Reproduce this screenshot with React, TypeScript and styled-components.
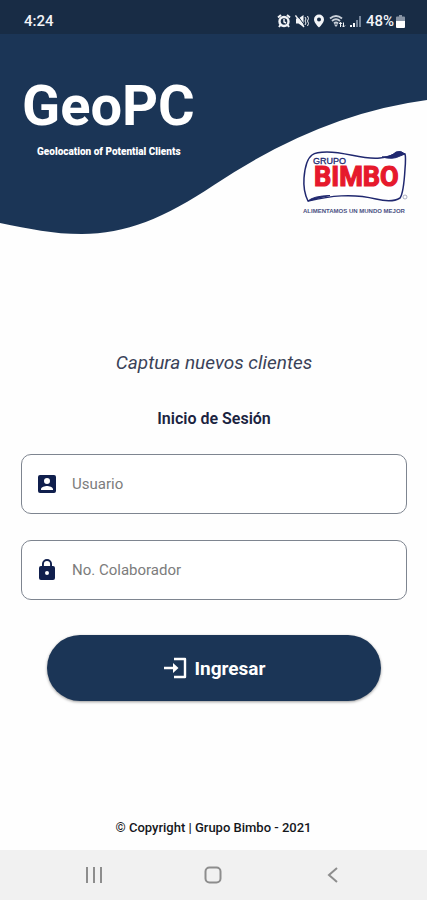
import React, { useState } from "react";
import styled, { createGlobalStyle } from "styled-components";

const navy = "#1b3556";
const ink = "#1a2340";

const GlobalStyle = createGlobalStyle`
  *, *::before, *::after { box-sizing: border-box; }
  body { margin: 0; background: #fff; font-family: Roboto, "Liberation Sans", sans-serif; }
  h1, h2, p { margin: 0; }
`;

const Screen = styled.div`
  min-height: 100vh;
  display: flex;
  flex-direction: column;
  background: #fefefe;
`;

const StatusBar = styled.div`
  height: 34px;
  padding: 8px 22px 0 24px;
  display: flex;
  align-items: center;
  justify-content: space-between;
  background: #182c45;
  color: #f2f4f7;
  font-size: 15px;
  font-weight: 500;
`;

const StatusIcons = styled.div`
  display: flex;
  align-items: center;
  gap: 4px;
  svg { display: block; }
`;

const Battery = styled.span`
  display: flex;
  align-items: center;
  gap: 2px;
`;

const Header = styled.header`
  position: relative;
  height: 200px;
  padding: 40px 19px 0 22px;
  display: flex;
  justify-content: space-between;
`;

const Wave = styled.svg`
  position: absolute;
  inset: 0;
  width: 100%;
  height: 100%;
`;

const Brand = styled.div`
  position: relative;
  color: #fff;
`;

const Title = styled.h1`
  font-size: 56px;
  line-height: 64px;
  font-weight: 700;
`;

const Tagline = styled.p`
  padding: 7px 0 0 15px;
  font-size: 10px;
  line-height: 14px;
  font-weight: 900;
`;

const Logo = styled.svg`
  position: relative;
  margin-top: 75px;
  flex: none;
`;

const Form = styled.form`
  flex: 1;
  padding: 114px 20px 0 21px;
  display: flex;
  flex-direction: column;
`;

const Lead = styled.p`
  text-align: center;
  font-size: 19px;
  line-height: 30px;
  font-style: italic;
  font-weight: 400;
  color: #3a4258;
`;

const FormTitle = styled.h2`
  margin: 29px 0 23px;
  text-align: center;
  font-size: 16px;
  line-height: 24px;
  font-weight: 600;
  color: ${ink};
`;

const Field = styled.label`
  height: 60px;
  margin-bottom: 26px;
  padding: 0 13px;
  display: flex;
  align-items: center;
  gap: 13px;
  border: 1px solid #7e8590;
  border-radius: 10px;
  background: #fff;
  svg { flex: none; }
`;

const TextInput = styled.input`
  flex: 1;
  min-width: 0;
  height: 40px;
  padding: 0;
  border: 0;
  outline: 0;
  background: transparent;
  font: 400 15px Roboto, "Liberation Sans", sans-serif;
  color: ${ink};
  &::placeholder { color: #7c7c7c; opacity: 1; }
`;

const Submit = styled.button`
  height: 66px;
  margin: 9px 26px 0;
  display: flex;
  align-items: center;
  justify-content: center;
  gap: 8px;
  border: 0;
  border-radius: 33px;
  background: ${navy};
  box-shadow: 0 1px 3px rgba(0, 0, 0, 0.4);
  color: #fff;
  font: 700 19px Roboto, "Liberation Sans", sans-serif;
  cursor: pointer;
`;

const Footer = styled.footer`
  padding-bottom: 12px;
  text-align: center;
  font-size: 13px;
  line-height: 20px;
  font-weight: 500;
  color: #15171c;
`;

const NavBar = styled.nav`
  height: 50px;
  padding: 0 34px;
  display: grid;
  grid-template-columns: repeat(3, 1fr);
  background: #f1f1f1;
`;

const NavButton = styled.button`
  display: flex;
  align-items: center;
  justify-content: center;
  padding: 0;
  border: 0;
  background: transparent;
  cursor: pointer;
`;

function AlarmIcon() {
  return (
    <svg width="14" height="14" viewBox="0 0 14 14" aria-hidden="true">
      <circle cx="7" cy="7.5" r="4.5" fill="none" stroke="#f2f4f7" strokeWidth="2.400" />
      <path d="M1 3.500 4 1M13 3.500 10 1M3.400 11 2 13M10.600 11 12 13" stroke="#f2f4f7" strokeWidth="2" />
      <path d="M7 5v3l2 1" fill="none" stroke="#f2f4f7" strokeWidth="1.400" />
    </svg>
  );
}

function MuteIcon() {
  return (
    <svg width="14" height="14" viewBox="0 0 14 14" aria-hidden="true">
      <path d="M1 4.500h2.500L8.500 1v12L3.500 9.500H1z" fill="#f2f4f7" />
      <path d="M2 1 9.500 11" stroke="#182c45" strokeWidth="1" />
      <path d="M.5 1.500 9 13" stroke="#f2f4f7" strokeWidth="1.300" />
      <path d="M10 3l1 2-1 2 1 2-1 2M12.500 2l1 2.500-1 2.500 1 2.500-1 2.500" fill="none" stroke="#f2f4f7" />
    </svg>
  );
}

function PinIcon() {
  return (
    <svg width="12" height="14" viewBox="0 0 12 14" aria-hidden="true">
      <path fillRule="evenodd" d="M6 .5a5 5 0 0 0-5 5C1 9 6 13.500 6 13.500S11 9 11 5.500a5 5 0 0 0-5-5zm0 3a2 2 0 1 1 0 4 2 2 0 0 1 0-4z" fill="#f2f4f7" />
    </svg>
  );
}

function WifiIcon() {
  return (
    <svg width="17" height="14" viewBox="0 0 17 14" aria-hidden="true">
      <path d="M1 4.500q6-5 12 0M3 7q4-3.500 8 0M5 9.500q2-1.800 4 0" fill="none" stroke="#c9d0d9" strokeWidth="1.900" />
      <path d="M5 10.500h4L7 13z" fill="#c9d0d9" />
      <path d="M11.500 13V8.500M10 10l1.500-1.800L13 10M14.500 8.500V13M13 11.500l1.500 1.500 1.500-1.500" fill="none" stroke="#f2f4f7" />
    </svg>
  );
}

function SignalIcon() {
  return (
    <svg width="12" height="13" viewBox="0 0 12 13" aria-hidden="true">
      <path d="M0 10h2v2H0zM3 8h2v4H3z" fill="#f2f4f7" />
      <path d="M6 5h2v7H6zM9 1h2v11H9z" fill="#75859a" />
    </svg>
  );
}

function BatteryIcon() {
  return (
    <svg width="9" height="13" viewBox="0 0 9 13" aria-hidden="true">
      <path d="M3 0h3v1.500h2q1 0 1 1V7H0V2.500q0-1 1-1h2z" fill="#8793a3" />
      <path d="M0 6h9v6q0 1-1 1H1q-1 0-1-1z" fill="#fff" />
    </svg>
  );
}

function BimboLogo() {
  return (
    <Logo width="106" height="68" viewBox="0 0 106 68" role="img" aria-label="Grupo Bimbo">
      <path
        d="M10 6Q14 3 25 3C45 3 60 11 78 9Q88 8 94 4L103 5Q104 8 103 20C102 37 101 45 98 49Q90 54 74 50C50 44 28 47 6 52Q1 42 2 29C3 16 6 9 10 6Z"
        fill="#fff"
        stroke="#20286f"
        strokeWidth="1.500"
      />
      <path d="M80 8Q89 8 94 3Q99 1 103 5L98 7Q91 11 80 8zM6 52Q11 47 28 46.500Q19 48 6 52z" fill="#20286f" stroke="#20286f" strokeWidth="1" />
      <text x="11" y="15" fontFamily="Liberation Sans, sans-serif" fontSize="9" fill="#20286f" stroke="#20286f" strokeWidth=".3">GRUPO</text>
      <text x="12" y="37" fontFamily="Roboto, sans-serif" fontSize="27" fontWeight="700" fill="#e6192c" stroke="#e6192c" strokeWidth="1.200">BIMBO</text>
      <circle cx="103" cy="48" r="2" fill="none" stroke="#8b8faa" strokeWidth=".7" />
      <text x="1" y="64" fontFamily="Liberation Sans, sans-serif" fontSize="6" fontWeight="700" fill="#4a5082">ALIMENTAMOS UN MUNDO MEJOR</text>
    </Logo>
  );
}

export default function App() {
  const [user, setUser] = useState("");
  const [employee, setEmployee] = useState("");

  return (
    <>
      <GlobalStyle />
      <Screen>
        <StatusBar>
          <span>4:24</span>
          <StatusIcons>
            <AlarmIcon />
            <MuteIcon />
            <PinIcon />
            <WifiIcon />
            <SignalIcon />
            <Battery>
              48%
              <BatteryIcon />
            </Battery>
          </StatusIcons>
        </StatusBar>
        <Header>
          <Wave viewBox="0 0 427 200" preserveAspectRatio="none" aria-hidden="true">
            <path d="M0 0V189C30 195 52 200 82 200C125 200 165 184 214 151Q320 80 427 66V0Z" fill={navy} />
          </Wave>
          <Brand>
            <Title>GeoPC</Title>
            <Tagline>Geolocation of Potential Clients</Tagline>
          </Brand>
          <BimboLogo />
        </Header>
        <Form onSubmit={(event) => event.preventDefault()}>
          <Lead>Captura nuevos clientes</Lead>
          <FormTitle>Inicio de Sesión</FormTitle>
          <Field>
            <svg width="24" height="24" viewBox="0 0 24 24" fill="#101f4d" aria-hidden="true">
              <path d="M3 5v14a2 2 0 0 0 2 2h14a2 2 0 0 0 2-2V5a2 2 0 0 0-2-2H5a2 2 0 0 0-2 2zm12 4a3 3 0 1 1-6 0 3 3 0 0 1 6 0zm-9 8c0-2 4-3.100 6-3.100s6 1.100 6 3.100v1H6v-1z" />
            </svg>
            <TextInput
              aria-label="Usuario"
              placeholder="Usuario"
              value={user}
              onChange={(event) => setUser(event.target.value)}
            />
          </Field>
          <Field>
            <svg width="24" height="24" viewBox="0 0 24 24" fill="#101f4d" aria-hidden="true">
              <path d="M18 8h-1V6A5 5 0 0 0 7 6v2H6a2 2 0 0 0-2 2v10a2 2 0 0 0 2 2h12a2 2 0 0 0 2-2V10a2 2 0 0 0-2-2zm-6 9a2 2 0 1 1 0-4 2 2 0 0 1 0 4zm3.100-9H8.900V6a3.100 3.100 0 0 1 6.200 0v2z" />
            </svg>
            <TextInput
              aria-label="No. Colaborador"
              placeholder="No. Colaborador"
              value={employee}
              onChange={(event) => setEmployee(event.target.value)}
            />
          </Field>
          <Submit type="submit">
            <svg width="24" height="24" viewBox="0 0 24 24" aria-hidden="true">
              <path d="M11 3h11v18H11" fill="none" stroke="#fff" strokeWidth="2.400" strokeLinejoin="round" />
              <path d="M1 10.700h9V7l5.500 5-5.500 5v-3.700H1z" fill="#fff" />
            </svg>
            Ingresar
          </Submit>
        </Form>
        <Footer>© Copyright | Grupo Bimbo - 2021</Footer>
        <NavBar>
          <NavButton type="button" aria-label="Recientes">
            <svg width="18" height="18" viewBox="0 0 18 18" aria-hidden="true">
              <path d="M2 1v16M9 1v16M16 1v16" stroke="#8d8d8d" strokeWidth="2" />
            </svg>
          </NavButton>
          <NavButton type="button" aria-label="Inicio">
            <svg width="18" height="18" viewBox="0 0 18 18" aria-hidden="true">
              <rect x="1.500" y="1.500" width="15" height="15" rx="4" fill="none" stroke="#8d8d8d" strokeWidth="2" />
            </svg>
          </NavButton>
          <NavButton type="button" aria-label="Atrás">
            <svg width="18" height="18" viewBox="0 0 18 18" aria-hidden="true">
              <path d="M13 2 5 9l8 7" fill="none" stroke="#8d8d8d" strokeWidth="2" />
            </svg>
          </NavButton>
        </NavBar>
      </Screen>
    </>
  );
}
